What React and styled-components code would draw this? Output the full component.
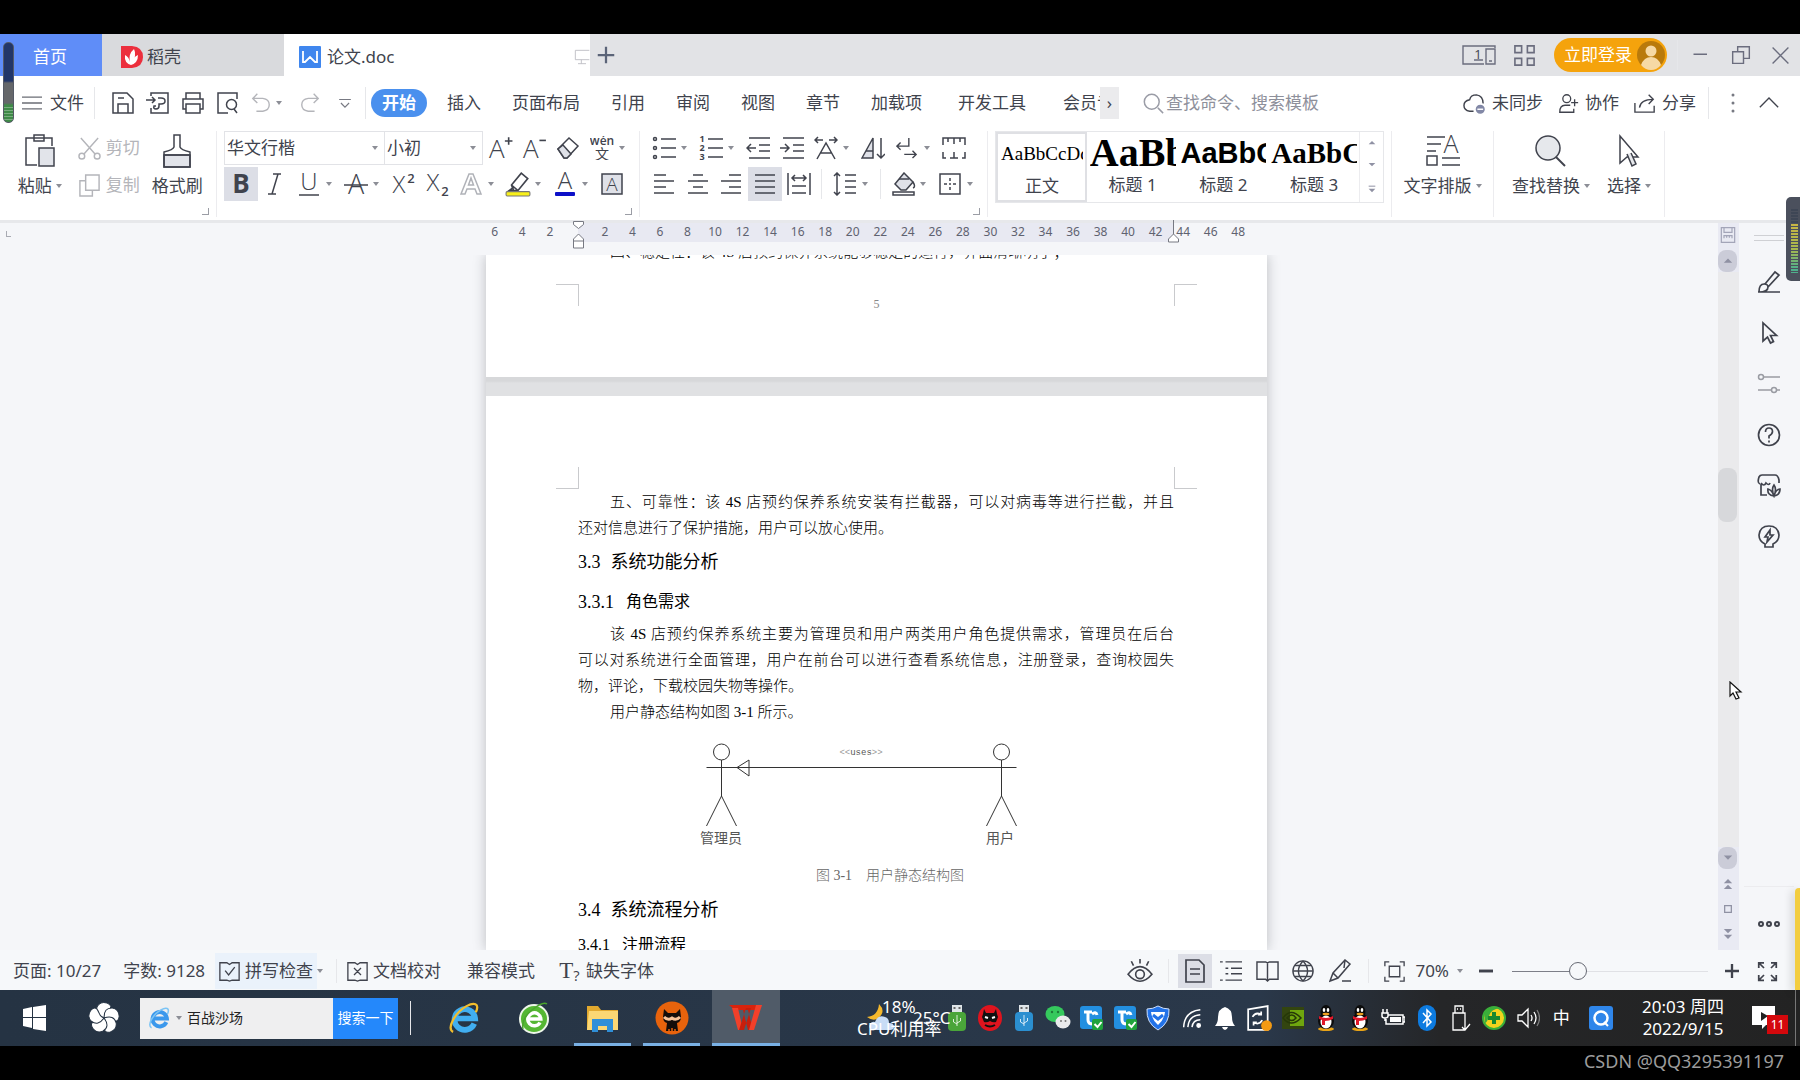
import React from "react";
import styled, { createGlobalStyle, css } from "styled-components";

const Global = createGlobalStyle`
  * { box-sizing: border-box; }
  body { margin: 0; background: #000; }
  button, input, select { font: inherit; color: inherit; border: 0; padding: 0; margin: 0; background: none; }
  p, h2, h3, figure { margin: 0; font-weight: inherit; }
  svg { display: block; flex: none; }
`;

const ink = "#40434d";
const pale = "#b4b5ba";

/* ---------- shell ---------- */
const Screen = styled.div`
  position: relative;
  display: flex;
  flex-direction: column;
  height: 100vh;
  padding-top: 34px;
  background: #000;
  color: ${ink};
  font: 17px/24px "Noto Sans", "Noto Sans CJK SC", sans-serif;
  overflow: hidden;
`;
const center = css`
  display: flex;
  align-items: center;
`;

/* ---------- title bar ---------- */
const TitleBar = styled.header`
  ${center}
  height: 42px;
  background: #e2e3e6;
`;
const DocTab = styled.button`
  ${center}
  gap: ${(p) => p.$gap || 0}px;
  height: 42px;
  width: ${(p) => p.$w}px;
  padding: 3px 0 0 ${(p) => p.$pad}px;
  background: ${(p) => p.$bg};
  color: ${(p) => p.$fg || ink};
`;
const Push = styled.span`
  margin-left: auto;
`;
const IconButton = styled.button`
  ${center}
  justify-content: center;
  width: ${(p) => p.$w || 34}px;
  height: ${(p) => p.$h || 34}px;
  color: ${(p) => p.$fg || "inherit"};
  background: ${(p) => (p.$on ? "#dcdee6" : "none")};
`;
const Login = styled.button`
  ${center}
  gap: 5px;
  height: 34px;
  width: 113px;
  margin: 0 8px 0 11px;
  padding: 0 2px 0 10px;
  border-radius: 17px;
  background: #f5a30c;
  color: #fff;
  white-space: nowrap;
`;

/* ---------- menu row ---------- */
const MenuRow = styled.nav`
  ${center}
  height: 54px;
  padding: 0 7px 0 22px;
  background: #fff;
  white-space: nowrap;
`;
const TextButton = styled.button`
  ${center}
  gap: ${(p) => p.$gap || 6}px;
  white-space: nowrap;
`;
const Divider = styled.span`
  width: 1px;
  height: ${(p) => p.$h || 30}px;
  margin: 0 ${(p) => p.$m || 6}px;
  background: #e6e7ea;
`;
const Caret = styled.span`
  width: 0;
  height: 0;
  border: 3px solid transparent;
  border-top: 4px solid #8c8e96;
  border-bottom: 0;
  flex: none;
`;
const CaretCell = styled.span`
  ${center}
  width: 13px;
  height: 34px;
`;
const ActiveMenu = styled.button`
  width: 56px;
  height: 28px;
  border-radius: 14px;
  background: #4a90ee;
  color: #fff;
  font-weight: 700;
`;
const MenuItems = styled.div`
  ${center}
  gap: 31px;
  margin-left: 20px;
`;
const WideItems = styled.div`
  ${center}
  gap: 37px;
  margin-left: 5px;
`;
const Clip = styled.button`
  width: 37px;
  overflow: hidden;
  text-align: left;
  white-space: nowrap;
`;
const MoreTabs = styled.button`
  width: 19px;
  height: 32px;
  background: #ebebed;
`;
const Search = styled.label`
  ${center}
  gap: 2px;
  margin-left: 24px;
  color: #9a9ca6;
  input { width: 170px; outline: 0; }
  input::placeholder { color: #8e909b; opacity: 1; }
`;
const MenuRight = styled.div`
  ${center}
  gap: 15px;
  margin-left: auto;
`;

/* ---------- ribbon ---------- */
const Ribbon = styled.section`
  display: flex;
  height: 93px;
  padding: 1px 0 0 10px;
  background: #fff;
  border-bottom: 3px solid #e7e8eb;
`;
const Group = styled.div`
  display: flex;
  flex-direction: column;
  gap: 2px;
  width: ${(p) => p.$w}px;
`;
const Row = styled.div`
  display: flex;
  align-items: ${(p) => (p.$top ? "flex-start" : "center")};
  height: ${(p) => p.$h || 34}px;
`;
const GroupLine = styled.span`
  width: 1px;
  height: 86px;
  margin: 0 7px;
  background: #ececef;
`;
const Launcher = styled.button`
  width: 7px;
  height: 7px;
  margin: 5px 0 0 auto;
  border: solid #9b9da5;
  border-width: 0 1px 1px 0;
`;
const BigTool = styled.button`
  display: flex;
  flex-direction: column;
  align-items: center;
  gap: 5px;
  width: ${(p) => p.$w}px;
  padding-top: 2px;
  span { display: flex; align-items: center; gap: 4px; white-space: nowrap; }
`;
const SmallTools = styled.div`
  display: flex;
  flex-direction: column;
  gap: 13px;
  width: 76px;
  padding: 5px 0 0 8px;
  color: ${pale};
`;
const Pick = styled.label`
  ${center}
  width: ${(p) => p.$w}px;
  height: 34px;
  padding: 0 6px 0 2px;
  border: solid #e2e3e7;
  border-width: 1px 1px 1px ${(p) => (p.$first ? 1 : 0)}px;
  select { flex: 1; min-width: 0; appearance: none; outline: 0; }
`;
const Thin = styled.span`
  width: 1px;
  height: 30px;
  margin: 0 6px 0 5px;
  background: #e6e7ea;
`;
const Gallery = styled.div`
  display: flex;
  height: 72px;
  width: 389px;
  border: 1px solid #e6e7ea;
`;
const StyleCard = styled.button`
  width: 91px;
  padding: 0 2px 4px 3px;
  border: ${(p) => (p.$on ? "2px solid #dfe0e4" : "0 solid #fff")};
  overflow: hidden;
  white-space: nowrap;
`;
const Sample = styled.span`
  display: block;
  height: 40px;
  overflow: hidden;
  color: #000;
  text-align: left;
  font: ${(p) => p.$font};
`;
const Arrows = styled.div`
  display: flex;
  flex-direction: column;
  align-items: center;
  justify-content: space-around;
  width: 24px;
  border-left: 1px solid #ececef;
`;

/* ---------- workspace ---------- */
const Workspace = styled.main`
  display: flex;
  flex: 1;
  min-height: 0;
  background: #f5f6f9;
`;
const Canvas = styled.div`
  display: flex;
  flex-direction: column;
  flex: 1;
  min-width: 0;
`;
const RulerRow = styled.div`
  position: relative;
  display: flex;
  justify-content: center;
  height: 32px;
  padding-left: 15px;
  flex: none;
`;
const Ruler = styled.div`
  position: relative;
  display: grid;
  grid-template-columns: repeat(28, 1fr);
  width: 771px;
  height: 19px;
  font-size: 12px;
  line-height: 18px;
  text-align: center;
  color: #5f6270;
  background: linear-gradient(to right, transparent 97px, #e8e9f2 97px, #e8e9f2 692px, transparent 692px);
`;
const Marker = styled.svg`
  position: absolute;
  top: -3px;
  left: ${(p) => p.$x}px;
`;
const CornerMark = styled.span`
  position: absolute;
  left: 6px;
  top: 8px;
  width: 5px;
  height: 6px;
  border: solid #a9abb3;
  border-width: 0 0 1px 1px;
`;
const Scroller = styled.div`
  display: flex;
  flex-direction: column;
  align-items: center;
  flex: 1;
  min-height: 0;
  padding-left: 35px;
  overflow: hidden;
`;
const Sheets = styled.div`
  display: flex;
  flex-direction: column;
  width: 781px;
  min-height: 0;
  flex: 1;
  background: linear-gradient(#d7d8da 126px, #e0e1e3 128px);
  box-shadow: 0 0 12px rgba(40, 42, 50, 0.28);
  color: #000;
  font: 300 15px/26px "Liberation Serif", "Noto Sans CJK SC", serif;
`;
const FirstSheet = styled.article`
  display: flex;
  flex-direction: column;
  justify-content: flex-end;
  height: 122px;
  padding: 0 70px 71px;
  margin-bottom: 19px;
  background: #fff;
  overflow: hidden;
  flex: none;
`;
const Sheet = styled.article`
  flex: 1;
  min-height: 0;
  padding: 71px 70px 0;
  background: #fff;
  overflow: hidden;
`;
const Marks = styled.div`
  display: flex;
  justify-content: space-between;
  height: 22px;
  margin-top: ${(p) => p.$mt || 0}px;
  color: #888;
  font-size: 12px;
  line-height: 40px;
`;
const Mark = styled.span`
  width: 23px;
  height: 22px;
  border: 0 solid #c9cacd;
  border-${(p) => p.$v}-width: 1px;
  border-${(p) => p.$h}-width: 1px;
`;
const Body = styled.div`
  padding: 0 23px 0 22px;
`;
const Line = styled.span`
  display: block;
  padding-left: ${(p) => (p.$indent ? 32 : 0)}px;
  white-space: nowrap;
  text-align-last: ${(p) => (p.$full ? "justify" : "left")};
`;
const H2 = styled.h2`
  display: flex;
  gap: 10px;
  font-size: 18px;
  line-height: 42px;
  font-weight: 400;
`;
const H3 = styled.h3`
  display: flex;
  gap: 12px;
  font-size: 16px;
  line-height: ${(p) => p.$lh}px;
  font-weight: 400;
  span { font-size: ${(p) => p.$num}px; }
`;
const Figure = styled.figure`
  display: flex;
  flex-direction: column;
  color: #666;
  svg text { font: 14px "Liberation Serif", "Noto Sans CJK SC", serif; }
  svg .tag { font: 9px "Liberation Mono", monospace; }
`;
const Caption = styled.figcaption`
  display: flex;
  justify-content: center;
  gap: 14px;
  padding-left: 28px;
  font-size: 14px;
  line-height: 26px;
`;

const ScrollBar = styled.div`
  display: flex;
  flex-direction: column;
  align-items: center;
  width: 21px;
  padding: 2px 2px 6px 0;
  gap: 5px;
  background: #e9eaf3;
`;
const Track = styled.div`
  flex: 1;
  width: 21px;
  margin: -5px -2px -5px 0;
  padding-top: 196px;
  background: #eaeaec;
`;
const Thumb = styled.div`
  width: 19px;
  height: 54px;
  border-radius: 8px;
  background: #d7d8db;
`;
const ScrollButton = styled.button`
  ${center}
  justify-content: center;
  width: 19px;
  height: ${(p) => (p.$plain ? 20 : 22)}px;
  border-radius: 8px;
  background: ${(p) => (p.$plain ? "none" : "#cbccd8")};
`;
const Side = styled.aside`
  display: flex;
  flex-direction: column;
  align-items: center;
  width: 61px;
  padding: 12px 2px 0 0;
`;
const Grip = styled.span`
  width: 30px;
  height: 6px;
  margin-bottom: 15px;
  border: solid #cfd0d4;
  border-width: 1px 0;
`;
const SideButton = styled.button`
  ${center}
  justify-content: center;
  width: 40px;
  height: 51px;
`;
const SideMore = styled.button`
  ${center}
  justify-content: center;
  width: 50px;
  height: 64px;
  margin-top: auto;
  padding-top: 10px;
  border-top: 1px solid #ececef;
`;

/* ---------- status bar ---------- */
const Status = styled.footer`
  ${center}
  height: 40px;
  padding: 2px 12px 0 13px;
  background: #f6f8fa;
  white-space: nowrap;
`;
const Stat = styled.button`
  ${center}
  gap: 5px;
  height: 36px;
  margin-right: ${(p) => p.$mr || 0}px;
  padding: 0 ${(p) => p.$px || 0}px;
  background: ${(p) => (p.$tint ? "#eaf2fb" : "none")};
`;
const Zoom = styled.input`
  appearance: none;
  width: 196px;
  height: 20px;
  margin: 0 10px;
  background: linear-gradient(to right, #7d7f88 64px, #e0e1e5 64px) center / 100% 1px no-repeat;
  &::-webkit-slider-thumb {
    appearance: none;
    width: 18px;
    height: 18px;
    border: 1px solid #666973;
    border-radius: 50%;
    background: #f6f8fa;
  }
`;

/* ---------- task bar ---------- */
const TaskBar = styled.footer`
  ${center}
  height: 56px;
  background: linear-gradient(to right, #253343 0, #2a384a 70%, #252628 80%, #232323 100%);
  color: #fff;
`;
const TaskButton = styled.button`
  ${center}
  justify-content: center;
  width: ${(p) => p.$w}px;
  height: 56px;
  border-bottom: 3px solid ${(p) => (p.$on ? "#79b0e4" : "transparent")};
  border-top: 3px solid transparent;
  background: ${(p) => (p.$active ? "#505b68" : "none")};
`;
const TaskSearch = styled.form`
  ${center}
  height: 41px;
  width: 258px;
  background: #efeff0;
  color: #222;
  font-size: 14px;
  label { ${center} gap: 5px; padding-left: 8px; flex: 1; }
  input { width: 110px; }
  button { height: 41px; width: 65px; background: #2488fb; color: #fff; }
`;
const Apps = styled.div`
  display: flex;
  gap: 12px;
  margin-left: 13px;
`;
const Weather = styled.div`
  position: relative;
  width: 83px;
  height: 56px;
  margin-left: auto;
  line-height: 22px;
`;
const Over = styled.span`
  position: absolute;
  left: ${(p) => p.$x}px;
  top: ${(p) => p.$y}px;
  white-space: nowrap;
`;
const Tray = styled.div`
  display: grid;
  grid-template-columns: repeat(19, 1fr);
  justify-items: center;
  align-items: center;
  width: 638px;
`;
const TrayButton = styled.button`
  ${center}
  justify-content: center;
  width: 28px;
  height: 40px;
  color: #fff;
`;
const Clock = styled.time`
  width: 102px;
  margin-left: 8px;
  text-align: center;
  line-height: 22px;
`;
const Notice = styled.button`
  position: relative;
  width: 36px;
  height: 30px;
  margin: 0 7px 0 18px;
`;
const Badge = styled.span`
  position: absolute;
  right: 0;
  top: 12px;
  width: 21px;
  height: 19px;
  background: #d4080c;
  font-size: 12px;
  line-height: 19px;
`;
const Edge = styled.span`
  width: 1px;
  height: 56px;
  margin-right: 4px;
  background: #777;
`;
const Foot = styled.div`
  height: 34px;
  padding: 2px 16px 0 0;
  color: #9c9c9c;
  font-size: 18px;
  line-height: 26px;
  text-align: right;
`;

/* ---------- floating gadgets ---------- */
const LeftMeter = styled.span`
  position: absolute;
  left: 3px;
  top: 42px;
  width: 11px;
  height: 81px;
  border-radius: 5px;
  border: 1px solid #555a66;
  background: repeating-linear-gradient(transparent 0 2px, rgba(255,255,255,.3) 2px 3px) 0 62px / 100% 16px no-repeat,
    linear-gradient(#223668 38px, #65676a 40px 60px, #3f8a48 62px);
`;
const RightMeter = styled.span`
  position: absolute;
  right: 0;
  top: 197px;
  width: 14px;
  height: 84px;
  padding: 12px 0 8px 5px;
  border-radius: 5px 0 0 5px;
  background: #4b505d;
  &::before {
    content: "";
    display: block;
    height: 64px;
    width: 7px;
    background: repeating-linear-gradient(transparent 0 2px, #4b505d 2px 3px),
      linear-gradient(#3e4655 14px, #c8b545 15px, #a7b84e 40px, #4fb08c 60px);
  }
`;
const YellowTag = styled.span`
  position: absolute;
  right: 0;
  bottom: 90px;
  width: 5px;
  height: 102px;
  border-radius: 4px 0 0 0;
  background: #f3cd3f;
  box-shadow: -3px 2px 8px rgba(0, 0, 0, 0.18);
`;
const Pointer = styled.svg`
  position: absolute;
  right: 57px;
  top: 681px;
`;

/* ---------- drawings ---------- */
const I = ({ s = 24, w = 1.5, c = "currentColor", vb = "0 0 24 24", h, children, d }) => (
  <svg width={s} height={h || s} viewBox={vb} fill="none" stroke={c} strokeWidth={w} aria-hidden="true">
    {d && <path d={d} />}
    {children}
  </svg>
);
const SvgText = styled.text`
  font: ${(p) => p.$wt || 400} ${(p) => p.$size}px ${(p) => p.$face || '"Open Sans", "Noto Sans CJK SC"'}, sans-serif;
  fill: ${(p) => p.$fill || "currentColor"};
  stroke: none;
  text-anchor: middle;
`;
const Tri = ({ up, y = 0 }) => (
  <path d={up ? `M1 ${y + 5}L6 ${y}l5 5z` : `M1 ${y}h10l-5 5z`} fill="#8f91a3" stroke="none" />
);
const Split = ({ label, on, children }) => (
  <>
    <IconButton aria-label={label} $on={on}>{children}</IconButton>
    <CaretCell><Caret /></CaretCell>
  </>
);
const Tool = ({ label, on, children }) => (
  <IconButton aria-label={label} $on={on}>{children}</IconButton>
);
const CURSOR = "M6 2v18l4.500-4 3 6 3-1.500-3-6h6z";

const AlignIcon = ({ rows }) => (
  <I>{rows.map(([a, b], i) => <path key={i} d={`M${a} ${3 + i * 6}H${b}`} />)}</I>
);
const Usb = ({ c }) => (
  <svg width="20" height="28" viewBox="0 0 20 28">
    <rect x="5" y="1" width="10" height="7" fill="#dfe5e8" />
    <path d="M7.500 3v2M12.500 3v2" stroke="#666" strokeWidth="2" />
    <rect x="1" y="8" width="18" height="19" rx="4" fill={c} />
    <path d="M10 11v11M6.500 15v3l3.500 2M13.500 14v3l-3.500 2" stroke="#fff" fill="none" opacity=".8" />
  </svg>
);
const BlueCheck = () => (
  <svg width="24" height="26" viewBox="0 0 24 26">
    <rect x="1" y="1" width="22" height="23" rx="3" fill="#238fe0" />
    <path d="M5 7h8M9 7v8q0 4 5 4M13 9q4-3 5 1" stroke="#fff" strokeWidth="3" fill="none" />
    <rect x="13" y="14" width="11" height="11" rx="2" fill="#1fa33c" />
    <path d="M15.500 19l3 3 4-5" stroke="#fff" strokeWidth="2" fill="none" />
  </svg>
);
const Penguin = () => (
  <svg width="20" height="28" viewBox="0 0 20 28">
    <ellipse cx="10" cy="25" rx="8" ry="2" fill="#e8a317" />
    <ellipse cx="10" cy="17" rx="8" ry="8" fill="#0c0c0c" />
    <ellipse cx="10" cy="8" rx="5.500" ry="7" fill="#0c0c0c" />
    <ellipse cx="10" cy="18" rx="5.500" ry="6.500" fill="#fff" />
    <ellipse cx="8" cy="6" rx="1.300" ry="2" fill="#fff" />
    <ellipse cx="12" cy="6" rx="1.300" ry="2" fill="#fff" />
    <ellipse cx="10" cy="10" rx="3.500" ry="1.300" fill="#f0a020" />
    <path d="M3 12q7 4 14 0v3q-4 2-8 2v4H6v-5l-3-1z" fill="#e0182a" />
  </svg>
);
const BrowserE = ({ s, c = "#41aef0", ring = "#f2bd2c" }) => (
  <svg width={s} height={s} viewBox="0 0 32 32" fill="none">
    <path d="M25.500 21a10 10 0 1 1 .8-5H9" stroke={c} strokeWidth="5.500" />
    <path d="M5 29C-2 26 7 10 18 4c7-4 13-3 9 6" stroke={ring} strokeWidth="2.200" />
  </svg>
);

const Person = ({ x }) => (
  <g>
    <ellipse cx={x} cy="15" rx="8" ry="8" />
    <path d={`M${x} 23V59L${x - 15} 89M${x} 59l15 30M${x - 15} 30.500h30`} />
  </g>
);

const rulerMarks = ["6", "4", "2", "", ...Array.from({ length: 24 }, (_, i) => String((i + 1) * 2))];

function Title() {
  return (
    <TitleBar>
      <DocTab $w={102} $pad={33} $bg="#5f8df8" $fg="#fff">首页</DocTab>
      <DocTab $w={182} $pad={19} $gap={4} $bg="#d9dadd">
        <svg width="22" height="22" viewBox="0 0 22 22">
          <path d="M0 0h11q11 1 11 11T11 22H0z" fill="#ec2f3d" />
          <path d="M10 19Q3 17 4 9q4 2 5 7Q7 8 13 3q3 6-2 14 1-6 6-8 0 8-7 10z" fill="#fff" />
        </svg>
        稻壳
      </DocTab>
      <DocTab $w={306} $pad={15} $gap={6} $bg="#fff">
        <svg width="22" height="22" viewBox="0 0 22 22" fill="none">
          <rect width="22" height="22" rx="1" fill="#3f86ee" />
          <path d="M4 5v11h2l5-5 5 5h2V5" stroke="#fff" strokeWidth="1.800" />
        </svg>
        论文.doc
        <Push><I s={16} w={1.3} c="#b9bac0" d="M23 2H2v14h21M11 16v6M6 22h12" /></Push>
      </DocTab>
      <IconButton $w={32} aria-label="新建"><I s={18} w={3} c="#5b6478" d="M12 1v22M1 12h22" /></IconButton>
      <Push />
      <IconButton $w={52} aria-label="窗口">
        <I s={34} h={22} vb="0 0 34 22" w={1.4} c="#6b6d7e"><path d="M22 20H1V2h32v2M12 16h9M24 5h9v15h-9zM27 17h3" /><SvgText x="16" y="15" $size={13}>1</SvgText></I>
      </IconButton>
      <IconButton $w={38} aria-label="应用">
        <I w={1.7} c="#6b6d7e" d="M2 2h7v7H2zM15 2h7v7h-7zM2 15h7v7H2zM15 15h7v7h-7z" s={23} />
      </IconButton>
      <Login>
        立即登录
        <svg width="28" height="30" viewBox="0 0 28 30">
          <circle cx="14" cy="15" r="14" fill="#b97a0b" />
          <circle cx="14" cy="11" r="5.500" fill="#f6d9a4" />
          <path d="M4 25q3-8 10-8t10 8q-4 5-10 5t-10-5z" fill="#f6d9a4" />
        </svg>
      </Login>
      <Divider $m={2} />
      <IconButton $w={41} aria-label="最小化"><I s={18} c="#6b6d7e" w={2} d="M2 11h18" /></IconButton>
      <IconButton $w={40} aria-label="还原"><I s={20} c="#6b6d7e" w={1.700} d="M2 8h13v14H2zM8 8V2h14v14h-7" /></IconButton>
      <IconButton $w={39} aria-label="关闭"><I s={19} c="#6b6d7e" w={1.700} d="M2 2l20 20M22 2L2 22" /></IconButton>
    </TitleBar>
  );
}

function Menu() {
  return (
    <MenuRow>
      <TextButton $gap={8}><I s={20} w={1.600} c="#6b6d75" d="M0 5h24M0 12h24M0 19h24" />文件</TextButton>
      <Divider $m={10} $h={32} />
      <IconButton $w={35} aria-label="保存"><I d="M2 2h14l6 6v14H2zM7 22v-9h10v9M7 7h6" /></IconButton>
      <IconButton $w={35} aria-label="输出为PDF"><I d="M5 5V2h17v20H5v-5M0 9h9M6 6l3 3-3 3M12 7h3q4 0 4 3t-4 3h-2v2q0 3-3 3t-2-3h2" /></IconButton>
      <IconButton $w={35} aria-label="打印"><I d="M5 8V2h14v6M5 18H2V8h20v10h-3M5 13h14v9H5z" /></IconButton>
      <IconButton $w={35} aria-label="打印预览"><I d="M21 8V2H2v20h10M21 22l-3-4"><circle cx="15.500" cy="13.500" r="5" /></I></IconButton>
      <IconButton $w={31} $fg={pale} aria-label="撤销"><I s={22} d="M8 2L3 7l5 5M3 7h11q7 1 7 7t-7 7H7" /></IconButton>
      <CaretCell><Caret /></CaretCell>
      <IconButton $w={41} $fg={pale} aria-label="恢复"><I s={22} d="M16 2l5 5-5 5M21 7H10q-7 1-7 7t7 7h7" /></IconButton>
      <IconButton $w={30} aria-label="自定义"><I s={14} w={2} c="#777982" d="M2 6h20M5 12l7 7 7-7" /></IconButton>
      <Divider $m={5} $h={32} />
      <ActiveMenu>开始</ActiveMenu>
      <MenuItems>
        {["插入", "页面布局", "引用", "审阅", "视图", "章节", "加载项"].map((t) => <TextButton key={t}>{t}</TextButton>)}
        <WideItems><TextButton>开发工具</TextButton><Clip>会员专享</Clip></WideItems>
      </MenuItems>
      <MoreTabs aria-label="更多选项卡">›</MoreTabs>
      <Search>
        <I s={21} w={1.700} d="M17 17l6 6"><circle cx="10" cy="10" r="8.500" /></I>
        <input placeholder="查找命令、搜索模板" aria-label="查找命令" />
      </Search>
      <MenuRight>
        <TextButton>
          <I s={23} d="M11 20H7q-6-1-6-6t6-6q1-5 7-5 7 1 7 9"><circle cx="18" cy="18" r="5.500" fill="#8288a6" stroke="#fff" /><path d="M15 18h6" stroke="#fff" /></I>
          未同步
        </TextButton>
        <TextButton><I s={21} d="M14 14H8q-6 0-6 8h16v-4M15 11h8M19 7v8"><circle cx="10" cy="6.500" r="4.500" /></I>协作</TextButton>
        <TextButton><I s={22} d="M1 12v10h21v-7M6 17q1-9 15-9M16 3l5 5-5 5" />分享</TextButton>
      </MenuRight>
      <Divider $m={12} $h={32} />
      <IconButton $w={24} aria-label="更多"><I s={24} c="none"><g fill="#777982"><circle cx="12" cy="4" r="1.500" /><circle cx="12" cy="12" r="1.500" /><circle cx="12" cy="20" r="1.500" /></g></I></IconButton>
      <IconButton $w={48} aria-label="收起功能区"><I s={20} w={1.600} d="M1 17L12 6l11 11" /></IconButton>
    </MenuRow>
  );
}

const LetterA = ({ x = 9, y = 21, size = 24 }) => <SvgText x={x} y={y} $size={size} $wt={300}>A</SvgText>;

function RibbonBar() {
  return (
    <Ribbon>
      <Group $w={199}>
        <Row $h={70} $top>
          <BigTool $w={60}>
            <I s={32} h={36} vb="0 0 32 36"><path d="M13 32H2V5h26v8M10 2h10v6H10z" /><path d="M15 15h15v18H15z" fill="#e2e4ea" /></I>
            <span>粘贴<Caret /></span>
          </BigTool>
          <SmallTools>
            <TextButton $gap={5}><I s={23} d="M3 1l15 17M21 1L6 18"><circle cx="4" cy="20" r="3" /><circle cx="20" cy="20" r="3" /></I>剪切</TextButton>
            <TextButton $gap={5}><I s={23} d="M8 1h14v16H8zM8 7H2v16h13v-6" />复制</TextButton>
          </SmallTools>
          <BigTool $w={64}>
            <I s={28} h={36} vb="0 0 28 36"><path d="M1 22h26v12H1z" fill="#e2e4ea" /><path d="M11 2h6v12q1 3 10 5v15H1V19q9-2 10-5zM1 22h26" /></I>
            <span>格式刷</span>
          </BigTool>
        </Row>
        <Launcher aria-label="剪贴板选项" />
      </Group>
      <GroupLine />
      <Group $w={408}>
        <Row>
          <Pick $w={161} $first><select aria-label="字体"><option>华文行楷</option></select><Caret /></Pick>
          <Pick $w={98}><select aria-label="字号"><option>小初</option></select><Caret /></Pick>
          <Tool label="增大字号"><I s={26}><LetterA /><path d="M20 2v7M16.500 5.500h7" /></I></Tool>
          <Tool label="减小字号"><I s={26}><LetterA /><path d="M17 5h6" /></I></Tool>
          <Tool label="清除格式"><I><path d="M2 13L13 2l9 8-11 12H8z" /><path d="M2 13l6 9h3l4-4-8-9z" fill="#dfe1e8" /></I></Tool>
          <Split label="拼音指南"><I><SvgText x="12" y="9" $size={12} $wt={600}>wén</SvgText><SvgText x="12" y="23" $size={14}>文</SvgText></I></Split>
        </Row>
        <Row>
          <Tool label="加粗" on><I><SvgText x="12" y="21" $size={26} $wt={700}>B</SvgText></I></Tool>
          <Tool label="倾斜"><I><path d="M10 2h8M5 22h8M15 2L9 22" /></I></Tool>
          <Split label="下划线"><I d="M2 23h20"><SvgText x="12" y="18" $size={24} $wt={300}>U</SvgText></I></Split>
          <Split label="删除线"><I d="M0 13h24"><LetterA x={12} y={22} size={27} /></I></Split>
          <Tool label="上标"><I><SvgText x="8" y="21" $size={24} $wt={300}>X</SvgText><SvgText x="20" y="11" $size={13} $wt={600}>2</SvgText></I></Tool>
          <Tool label="下标"><I><SvgText x="8" y="19" $size={24} $wt={300}>X</SvgText><SvgText x="20" y="24" $size={13} $wt={600}>2</SvgText></I></Tool>
          <Split label="文字效果"><I c="#b0b2b8" d="M2 22L10 2h4l8 20h-4l-2-5H8l-2 5zM9.500 13h5L12 6z" /></Split>
          <Split label="突出显示"><I s={26}><path d="M6 13l9-11 6 5-9 11H8zM6 13l6 5M8 15l-4 3h4" /><rect x="1" y="19" width="22" height="4" rx="1" fill="#f8f01a" stroke="#777" strokeWidth="1" /></I></Split>
          <Split label="字体颜色"><I><LetterA x={12} y={17} /><rect x="2" y="20" width="20" height="4" rx="1" fill="#0d10c8" stroke="none" /></I></Split>
          <Tool label="字符底纹"><I><path d="M2 2h20v20H2z" fill="#dfe1e8" /><LetterA x={12} y={19} size={19} /></I></Tool>
        </Row>
        <Launcher aria-label="字体选项" />
      </Group>
      <GroupLine />
      <Group $w={333}>
        <Row>
          <Split label="项目符号"><I d="M9 3h15M9 12h15M9 21h15"><circle cx="3" cy="3" r="1.500" /><circle cx="3" cy="12" r="1.500" /><circle cx="3" cy="21" r="1.500" /></I></Split>
          <Split label="编号"><I d="M9 3h15M9 12h15M9 21h15">{["1", "2", "3"].map((n, i) => <SvgText key={n} x="3" y={6 + i * 9} $size={9} $wt={700}>{n}</SvgText>)}</I></Split>
          <Tool label="减少缩进"><I d="M3 2h21M13 9h11M13 15h11M3 22h21M10 12H1M5 8l-4 4 4 4" /></Tool>
          <Tool label="增加缩进"><I d="M3 2h21M13 9h11M13 15h11M3 22h21M0 12h9M5 8l4 4-4 4" /></Tool>
          <Split label="中文版式"><I d="M1 4h8M4 1L1 4l3 3M15 4h8M20 1l3 3-3 3M3 23l9-16 9 16M6 17h12" /></Split>
          <Tool label="排序"><I><path d="M1 22L12 2v20zM5 15h7" fill="#dfe1e8" /><path d="M20 2v20M16 18l4 4 4-4" /></I></Tool>
          <Split label="显示编辑标记"><I s={22} d="M14 1v9H1M5 6l-4 4 4 4M9 19h13M18 15l4 4-4 4" /></Split>
          <Tool label="制表位"><I d="M1 9V2h22v7M6 2v4M12 2v6M18 2v4M1 16v6h3M8 22h8M12 16v6M20 22h3v-6" /></Tool>
        </Row>
        <Row>
          <Tool label="左对齐"><AlignIcon rows={[[2, 14], [2, 22], [2, 14], [2, 22]]} /></Tool>
          <Tool label="居中对齐"><AlignIcon rows={[[7, 17], [2, 22], [7, 17], [2, 22]]} /></Tool>
          <Tool label="右对齐"><AlignIcon rows={[[10, 22], [2, 22], [10, 22], [2, 22]]} /></Tool>
          <Tool label="两端对齐" on><AlignIcon rows={[[2, 22], [2, 22], [2, 22], [2, 22]]} /></Tool>
          <Tool label="分散对齐"><I d="M1 1v22M23 1v22M5 14h14M5 21h14M5 6h14M8 3L5 6l3 3M16 3l3 3-3 3" /></Tool>
          <Thin />
          <Split label="行距"><I d="M4 1v22M1 4l3-3 3 3M1 20l3 3 3-3M12 3h11M12 9h11M12 15h11M12 21h11" /></Split>
          <Thin />
          <Split label="底纹颜色"><I><path d="M12 1l9 9-7 8H9l-6-6z" fill="#dfe1e8" /><path d="M7 7h10M21 10q3 5 0 6M1 20h21v3H1z" /></I></Split>
          <Split label="边框"><I d="M2 2h20v20H2zM12 6v3M12 11v2M12 15v3M6 12h3M15 12h3" /></Split>
        </Row>
        <Launcher aria-label="段落选项" />
      </Group>
      <GroupLine />
      <Gallery>
        <StyleCard $on><Sample $font={'19px/40px "Liberation Serif", serif'}>AaBbCcDd</Sample>正文</StyleCard>
        <StyleCard><Sample $font={'700 40px/40px "Liberation Serif", serif'}>AaBb</Sample>标题 1</StyleCard>
        <StyleCard><Sample $font={'700 29px/40px "Liberation Sans", sans-serif'}>AaBbC</Sample>标题 2</StyleCard>
        <StyleCard><Sample $font={'700 29px/40px "Liberation Serif", serif'}>AaBbC</Sample>标题 3</StyleCard>
        <Arrows>
          <button aria-label="上一行"><I s={8} h={6} vb="0 0 12 6"><Tri up /></I></button>
          <button aria-label="下一行"><I s={8} h={6} vb="0 0 12 6"><Tri /></I></button>
          <button aria-label="全部样式"><I s={8} h={9} vb="0 0 12 12" c="#8f91a3"><path d="M1 1h10" /><Tri y={5} /></I></button>
        </Arrows>
      </Gallery>
      <GroupLine />
      <BigTool $w={87}>
        <I s={36} vb="0 0 36 36"><path d="M2 4h18M2 11h14M2 18h9M2 23h10v9H2zM17 25h18M17 32h18" /><LetterA x={26} y={20} size={25} /></I>
        <span>文字排版<Caret /></span>
      </BigTool>
      <GroupLine />
      <BigTool $w={100}>
        <I s={36} vb="0 0 36 36"><circle cx="15" cy="15" r="12" fill="#e6e8ec" /><path d="M23 24l9 9" strokeWidth="2" /></I>
        <span>查找替换<Caret /></span>
      </BigTool>
      <BigTool $w={56}>
        <I s={36} vb="0 0 36 36"><path d="M9 3v27l7-6h11z" fill="#fff" /><path d="M16 21l5 12 4-2-5-11" fill="#e6e8ec" /></I>
        <span>选择<Caret /></span>
      </BigTool>
      <GroupLine />
    </Ribbon>
  );
}

function Document() {
  return (
    <Canvas>
      <RulerRow>
        <CornerMark />
        <Ruler>
          {rulerMarks.map((m, i) => <span key={i}>{m}</span>)}
          <Marker $x={91} width="13" height="30" viewBox="0 0 13 30" fill="#fff" stroke="#777982"><path d="M1.500 1.500h10v3l-5 4-5-4zM6.500 14l5 5v9h-10v-9zM1.500 21h10" /></Marker>
          <Marker $x={686} width="13" height="24" viewBox="0 0 13 24" fill="#fff" stroke="#777982"><path d="M6.500 0v14l5 5v3h-10v-3l5-5" /></Marker>
        </Ruler>
      </RulerRow>
      <Scroller>
        <Sheets>
          <FirstSheet>
            <Body><Line $indent>四、稳定性：该 4S 店预约保养系统能够稳定的运行，界面清晰明了；</Line></Body>
            <Marks $mt={19}><Mark $v="top" $h="right" />5<Mark $v="top" $h="left" /></Marks>
          </FirstSheet>
          <Sheet>
            <Marks><Mark $v="bottom" $h="right" /><Mark $v="bottom" $h="left" /></Marks>
            <Body>
              <p>
                <Line $indent $full>五、可靠性：该 4S 店预约保养系统安装有拦截器，可以对病毒等进行拦截，并且</Line>
                <Line>还对信息进行了保护措施，用户可以放心使用。</Line>
              </p>
              <H2><span>3.3</span>系统功能分析</H2>
              <H3 $num={18} $lh={38}><span>3.3.1</span>角色需求</H3>
              <p>
                <Line $indent $full>该 4S 店预约保养系统主要为管理员和用户两类用户角色提供需求，管理员在后台</Line>
                <Line $full>可以对系统进行全面管理，用户在前台可以进行查看系统信息，注册登录，查询校园失</Line>
                <Line>物，评论，下载校园失物等操作。</Line>
                <Line $indent>用户静态结构如图 3-1 所示。</Line>
              </p>
              <Figure>
                <svg width="595" height="138" viewBox="0 -12 595 138" fill="none" stroke="#333" strokeWidth="1">
                  <Person x={143.5} />
                  <Person x={423.5} />
                  <path d="M158 30.500H423M171 23v16l-12-8.500z" fill="#fff" />
                  <g fill="#555" stroke="none" textAnchor="middle">
                    <text x="143" y="106">管理员</text>
                    <text x="422" y="106">用户</text>
                    <text x="283" y="18" className="tag"><tspan fill="#999">&lt;&lt;</tspan>uses<tspan fill="#999">&gt;&gt;</tspan></text>
                  </g>
                </svg>
                <Caption><span>图 3-1</span>用户静态结构图</Caption>
              </Figure>
              <H2><span>3.4</span>系统流程分析</H2>
              <H3 $num={16} $lh={28}><span>3.4.1</span>注册流程</H3>
            </Body>
          </Sheet>
        </Sheets>
      </Scroller>
    </Canvas>
  );
}

function Work() {
  return (
    <Workspace>
      <Document />
      <ScrollBar>
        <ScrollButton $plain aria-label="标尺"><I s={16} c="#a3a5b8" w={1.800} d="M2 1h20v22H2zM6 2v6h12V2M6 17v-4h12v4M10 13v3M14 13v3" /></ScrollButton>
        <ScrollButton aria-label="向上"><I s={10} h={6} vb="0 0 12 6"><Tri up /></I></ScrollButton>
        <Track><Thumb /></Track>
        <ScrollButton aria-label="向下"><I s={10} h={6} vb="0 0 12 6"><Tri /></I></ScrollButton>
        <ScrollButton $plain aria-label="上一页"><I s={10} h={12} vb="0 0 12 12"><Tri up /><Tri up y={7} /></I></ScrollButton>
        <ScrollButton $plain aria-label="选择浏览对象"><I s={10} vb="0 0 12 12" c="#8f91a3" d="M2 2h8v8H2z" /></ScrollButton>
        <ScrollButton $plain aria-label="下一页"><I s={10} h={12} vb="0 0 12 12"><Tri /><Tri y={7} /></I></ScrollButton>
      </ScrollBar>
      <Side>
        <Grip />
        <SideButton aria-label="样式"><I w={1.700} d="M1 22h22M2 22q0-8 5-8 4 0 4 3 0 5-9 5M8 14L18 2l4 3-11 12" /></SideButton>
        <SideButton aria-label="选择"><I w={1.700} d={CURSOR} /></SideButton>
        <SideButton aria-label="属性"><I c="#9a9ca3" d="M7 5h16M1 18h13M20 18h3"><circle cx="4" cy="5" r="2.500" /><circle cx="17" cy="18" r="2.500" /></I></SideButton>
        <SideButton aria-label="帮助"><I w={1.700} d="M8.500 9q0-4 3.500-4t3.500 3.500Q15.500 11 12 13v2.500M12 17.500v2"><circle cx="12" cy="12" r="10.500" /></I></SideButton>
        <SideButton aria-label="稻壳资源"><I w={1.700} d="M3 10Q0 9 2 3q1-2 3-2h13q3 0 4 5v3M4 10v11h6M4 9q3 4 5 0 3 3 4 0M17 22q-7-1-6-7 4 1 6 7 6-1 6-7-4 0-6 7-3-7 0-11 3 4 0 11" /></SideButton>
        <SideButton aria-label="灵感"><I w={1.700} d="M8 22v-3q-6-3-6-9Q3 1 12 1t10 9q0 6-6 9v3zM13 5l-5 7h3l-1 5 6-7h-3z" /></SideButton>
        <SideMore aria-label="更多"><I s={24} h={8} vb="0 0 24 8" w={2}><circle cx="4" cy="4" r="2" /><circle cx="12" cy="4" r="2" /><circle cx="20" cy="4" r="2" /></I></SideMore>
      </Side>
    </Workspace>
  );
}

function StatusBar() {
  return (
    <Status>
      <Stat $mr={22}>页面: 10/27</Stat>
      <Stat $mr={10}>字数: 9128</Stat>
      <Stat $tint $px={4}><I s={21} d="M9 2H1v20h8l3 1 3-1h8V2h-8l-3 2zM7 11l4 5 7-9" />拼写检查</Stat>
      <CaretCell><Caret /></CaretCell>
      <Divider $m={6} $h={24} />
      <Stat $mr={22} $px={4}><I s={21} d="M9 2H1v20h8l3 1 3-1h8V2h-8l-3 2zM8 8l8 8M16 8l-8 8" />文档校对</Stat>
      <Stat $mr={24}>兼容模式</Stat>
      <Stat><I s={22}><SvgText x="8" y="20" $size={25} $face={'"Liberation Serif"'}>T</SvgText><SvgText x="19" y="23" $size={16}>?</SvgText></I>缺失字体</Stat>
      <Push />
      <IconButton $w={38} aria-label="护眼模式"><I s={26} d="M1 15q11-14 22 0-11 13-22 0zM12 1v4M4 3l2 4M20 3l-2 4"><circle cx="12" cy="15" r="4" /></I></IconButton>
      <Divider $m={9} $h={24} />
      <IconButton $w={34} $on aria-label="页面视图"><I w={1.700} d="M3 1h13l5 5v17H3zM7 10h10M7 15h10" /></IconButton>
      <IconButton $w={38} aria-label="大纲"><I s={22} d="M0 2h3M6 2h18M6 9h3M12 9h12M6 15h3M12 15h12M0 22h3M6 22h18" /></IconButton>
      <IconButton $w={34} aria-label="阅读版式"><I s={23} d="M12 3v20M1 2h9l2 1 2-1h9v18h-9l-2 2-2-2H1z" /></IconButton>
      <IconButton $w={38} aria-label="Web版式"><I s={22} d="M1 12h22M3 6h18M3 18h18M12 1q-10 11 0 22M12 1q10 11 0 22"><circle cx="12" cy="12" r="11" /></I></IconButton>
      <IconButton $w={38} aria-label="写作模式"><I d="M1 22L4 14 16 1l5 4L9 19zM4 14l5 5M13 22h9M16 1l-1 8" /></IconButton>
      <Divider $m={8} $h={24} />
      <Stat $mr={3} $px={7} aria-label="适合页面"><I s={21} d="M1 6V1h5M18 1h5v5M23 18v5h-5M6 23H1v-5M6 6h12v12H6z" /></Stat>
      <Stat $mr={8}>70%</Stat>
      <CaretCell><Caret /></CaretCell>
      <IconButton $w={32} aria-label="缩小"><I s={14} w={5} d="M0 12h24" /></IconButton>
      <Zoom type="range" min="10" max="180" defaultValue="64" aria-label="缩放" />
      <IconButton $w={28} aria-label="放大"><I s={14} w={4} d="M0 12h24M12 0v24" /></IconButton>
      <IconButton $w={42} aria-label="全屏"><I s={21} w={2} d="M2 8V2h6M16 2h6v6M22 16v6h-6M8 22H2v-6M2 2l6 6M22 2l-6 6M22 22l-6-6M2 22l6-6" /></IconButton>
    </Status>
  );
}

const trayItems = [
  ["U盘", <Usb c="#4aa53a" />],
  ["游戏助手", <svg width="26" height="28" viewBox="0 0 26 28"><ellipse cx="13" cy="14" rx="12" ry="13" fill="#e0141e" /><path d="M7 5l2 4h8l2-4 1 5 1 3-2 5q-3 1-6-1-3 2-6 1l-2-5 1-3z" fill="#111" /><path d="M8 21q5 3 10 0" stroke="#111" strokeWidth="2" fill="none" /><path d="M8 13l3 1M18 13l-3 1" stroke="#fff" strokeWidth="2" /></svg>],
  ["USB设备", <Usb c="#2b8fd0" />],
  ["微信", <svg width="26" height="24" viewBox="0 0 26 24"><ellipse cx="10" cy="8" rx="9.500" ry="8" fill="#35c95d" /><ellipse cx="18" cy="16" rx="7.500" ry="6.500" fill="#e9eaec" /><g fill="#1d7a39"><circle cx="7" cy="6" r="1.200" /><circle cx="13" cy="6" r="1.200" /></g><g fill="#777"><circle cx="16" cy="15" r="1" /><circle cx="20.500" cy="15" r="1" /></g></svg>],
  ["同步", <BlueCheck />],
  ["备份", <BlueCheck />],
  ["安全卫士", <svg width="24" height="26" viewBox="0 0 24 26"><path d="M12 1q5 3 11 3 1 14-11 21Q0 18 1 4q6 0 11-3z" fill="#2272e8" stroke="#cfe0fb" /><path d="M5 7h14q-1 8-7 13Q6 15 5 7z" fill="#fff" /><path d="M7 10l5 4 5-4" stroke="#2272e8" strokeWidth="3" fill="none" /></svg>],
  ["网络", <I s={20} w={1.800} d="M2 23Q3 4 22 2M7 23Q8 9 22 8M12 23q1-9 10-9"><circle cx="20" cy="21" r="2" fill="#fff" /></I>],
  ["提醒", <svg width="20" height="24" viewBox="0 0 20 24"><path d="M10 1q7 2 7 10 0 6 3 9H0q3-3 3-9 0-8 7-10zM7 21h6q-1 3-3 3t-3-3z" fill="#fff" /></svg>],
  ["更新", <I s={26} w={1.600} d="M2 4l18-3v22H2zM6 11q3-5 8-2M14 6v3h-3M15 14q-3 5-8 2M7 19v-3h3"><circle cx="19" cy="19" r="5" fill="#f39a13" stroke="none" /></I>],
  ["显卡", <svg width="22" height="22" viewBox="0 0 22 22"><rect width="22" height="22" fill="#33450f" /><path d="M8 3h14v16H8z" fill="#6fa60e" /><path d="M1 11q8-11 18 0-10 10-18 0zM5 11q5-6 9 0-4 5-9 0z" fill="none" stroke="#263808" strokeWidth="1.500" /></svg>],
  ["QQ", <Penguin />],
  ["QQ 2", <Penguin />],
  ["电源", <I s={24} h={20} vb="0 0 24 20"><path d="M7 7h15v9H5v-5M22 9h2v5h-2M2 1v4M6 1v4M1 5h6v3q0 2-3 2t-3-2zM4 10v3" /><rect x="9" y="9" width="11" height="5" fill="#fff" stroke="none" /></I>],
  ["蓝牙", <svg width="18" height="26" viewBox="0 0 18 26" fill="none"><rect width="18" height="26" rx="9" fill="#0d7be0" /><path d="M5 8l8 9-4 4V5l4 4-8 9" stroke="#fff" strokeWidth="1.500" /></svg>],
  ["安全弹出", <I s={22} h={26} vb="0 0 22 26" w={1.300} d="M6 8V1h8v7M4 8h12v17H4zM8 4h1M11 4h1M13 22l3 3 5-6" />],
  ["杀毒", <svg width="24" height="24" viewBox="0 0 24 24"><circle cx="12" cy="12" r="11" fill="#f2d21d" stroke="#3aae3a" strokeWidth="2" /><path d="M2 6Q8-2 18 2q-9 1-11 8T3 17z" fill="#3aae3a" /><path d="M12 6v12M6 12h12" stroke="#16882f" strokeWidth="4" /></svg>],
  ["音量", <I s={24} w={1.300} d="M2 9h4l6-6v18l-6-6H2zM15 9q2 3 0 6M18 6q4 6 0 12"><path d="M21 4q5 8 0 16" opacity=".4" /></I>],
  ["输入法", "中"],
];

function Tasks() {
  return (
    <TaskBar>
      <TaskButton $w={68} aria-label="开始"><svg width="24" height="26" viewBox="0 0 24 26"><path d="M1 4l9-2v10H1zM11 2l13-2v12H11zM1 13h9v10l-9-2zM11 13h13v13l-13-2z" fill="#fff" /></svg></TaskButton>
      <TaskButton $w={72} aria-label="浏览器">
        <svg width="32" height="32" viewBox="0 0 32 32" fill="#fff" stroke="#253343">
          {[0, 72, 144, 216, 288].map((a) => <path key={a} d="M16 16Q6 13 9 5q3-6 10-4 7 3 1 8-4 3-4 7z" transform={`rotate(${a} 16 16)`} />)}
        </svg>
      </TaskButton>
      <TaskSearch onSubmit={(e) => e.preventDefault()}>
        <label><BrowserE s={23} c="#3b98ec" ring="#7cc4f5" /><Caret /><input defaultValue="百战沙场" aria-label="搜索" /></label>
        <button>搜索一下</button>
      </TaskSearch>
      <Divider $m={12} $h={34} />
      <Apps>
        <TaskButton $w={57} aria-label="IE"><BrowserE s={33} /></TaskButton>
        <TaskButton $w={57} aria-label="360浏览器">
          <svg width="32" height="32" viewBox="0 0 32 32" fill="none"><circle cx="16" cy="17" r="14" fill="#55b733" stroke="#eef6ea" strokeWidth="2" /><path d="M22 20.500a6.500 6.500 0 1 1 .8-3.500H10" stroke="#fff" strokeWidth="3.500" /><path d="M5 27Q3 17 14 8t15-6" stroke="#4aa52d" strokeWidth="1.500" /></svg>
        </TaskButton>
        <TaskButton $w={57} $on aria-label="资源管理器">
          <svg width="32" height="28" viewBox="0 0 32 28"><path d="M0 2h11l3 4h17v20H0z" fill="#e2a92f" /><path d="M2 7h29v19H0z" fill="#fbd774" /><path d="M5 28V15h21v13h-6v-6h-9v6z" fill="#2f8fd8" /></svg>
        </TaskButton>
        <TaskButton $w={57} $on aria-label="游戏">
          <svg width="34" height="34" viewBox="0 0 34 34"><circle cx="17" cy="17" r="16.500" fill="#e8630c" /><path d="M9 8l4 4h8l4-4 1 8q0 5-4 6l1 8H11l1-8q-4-1-4-6z" fill="#140d0a" /><path d="M9 16q4 4 8 1 4 3 8-1" fill="none" stroke="#f6c39a" strokeWidth="3" /><path d="M14 31v-3M17 31v-4M20 31v-3" stroke="#e8630c" strokeWidth="1.500" /></svg>
        </TaskButton>
        <TaskButton $w={68} $on $active aria-label="WPS">
          <svg width="34" height="26" viewBox="0 0 34 26"><path d="M0 0h33l-3 5H6z" fill="#d9230d" /><path d="M3 3h6l5 22h-5z" fill="#f2402a" /><path d="M10 25h5l7-22h-5zM24 25h-5L14 5h5z" fill="#c81e0c" /><path d="M20 25h5l8-25h-6z" fill="#f2402a" /></svg>
        </TaskButton>
      </Apps>
      <Weather>
        <Over $x={10} $y={14}>
          <svg width="32" height="28" viewBox="0 0 32 28"><path d="M12 0q8 8-2 15-5 2-10-2Q11 12 12 0z" fill="#f4b82c" /><path d="M6 26q-5-1-3-6 2-3 5-2 3-8 10-5 4 1 4 6 5 0 5 4 0 3-4 3z" fill="#c8dcf6" /></svg>
        </Over>
        <Over $x={25} $y={6}>18%</Over>
        <Over $x={56} $y={17}>25°C</Over>
        <Over $x={0} $y={28}>CPU利用率</Over>
      </Weather>
      <Tray>{trayItems.map(([n, g]) => <TrayButton key={n} aria-label={n}>{g}</TrayButton>)}</Tray>
      <IconButton $w={46} aria-label="QQ浏览器">
        <svg width="24" height="24" viewBox="0 0 24 24" fill="none"><rect width="24" height="24" rx="3" fill="#2f86ea" /><circle cx="12" cy="12" r="6.500" stroke="#fff" strokeWidth="2.500" /><path d="M15 16l4 4" stroke="#fff" strokeWidth="2" /></svg>
      </IconButton>
      <Clock>20:03 周四<br />2022/9/15</Clock>
      <Notice aria-label="通知"><svg width="24" height="24" viewBox="0 0 24 24"><path d="M0 0h23v19h-9l-4 4v-4H0z" fill="#fff" /><path d="M9 6l7 4-7 5z" fill="#222" /></svg><Badge>11</Badge></Notice>
      <Edge />
    </TaskBar>
  );
}

export default function App() {
  return (
    <Screen>
      <Global />
      <Title />
      <Menu />
      <RibbonBar />
      <Work />
      <StatusBar />
      <Tasks />
      <Foot>CSDN @QQ3295391197</Foot>
      <LeftMeter />
      <RightMeter />
      <YellowTag />
      <Pointer width="14" height="19" viewBox="0 0 14 19"><path d="M1 1v14l3-3 3 6 3-1-3-6h5z" fill="#fff" stroke="#111" strokeWidth="1.200" /></Pointer>
    </Screen>
  );
}
